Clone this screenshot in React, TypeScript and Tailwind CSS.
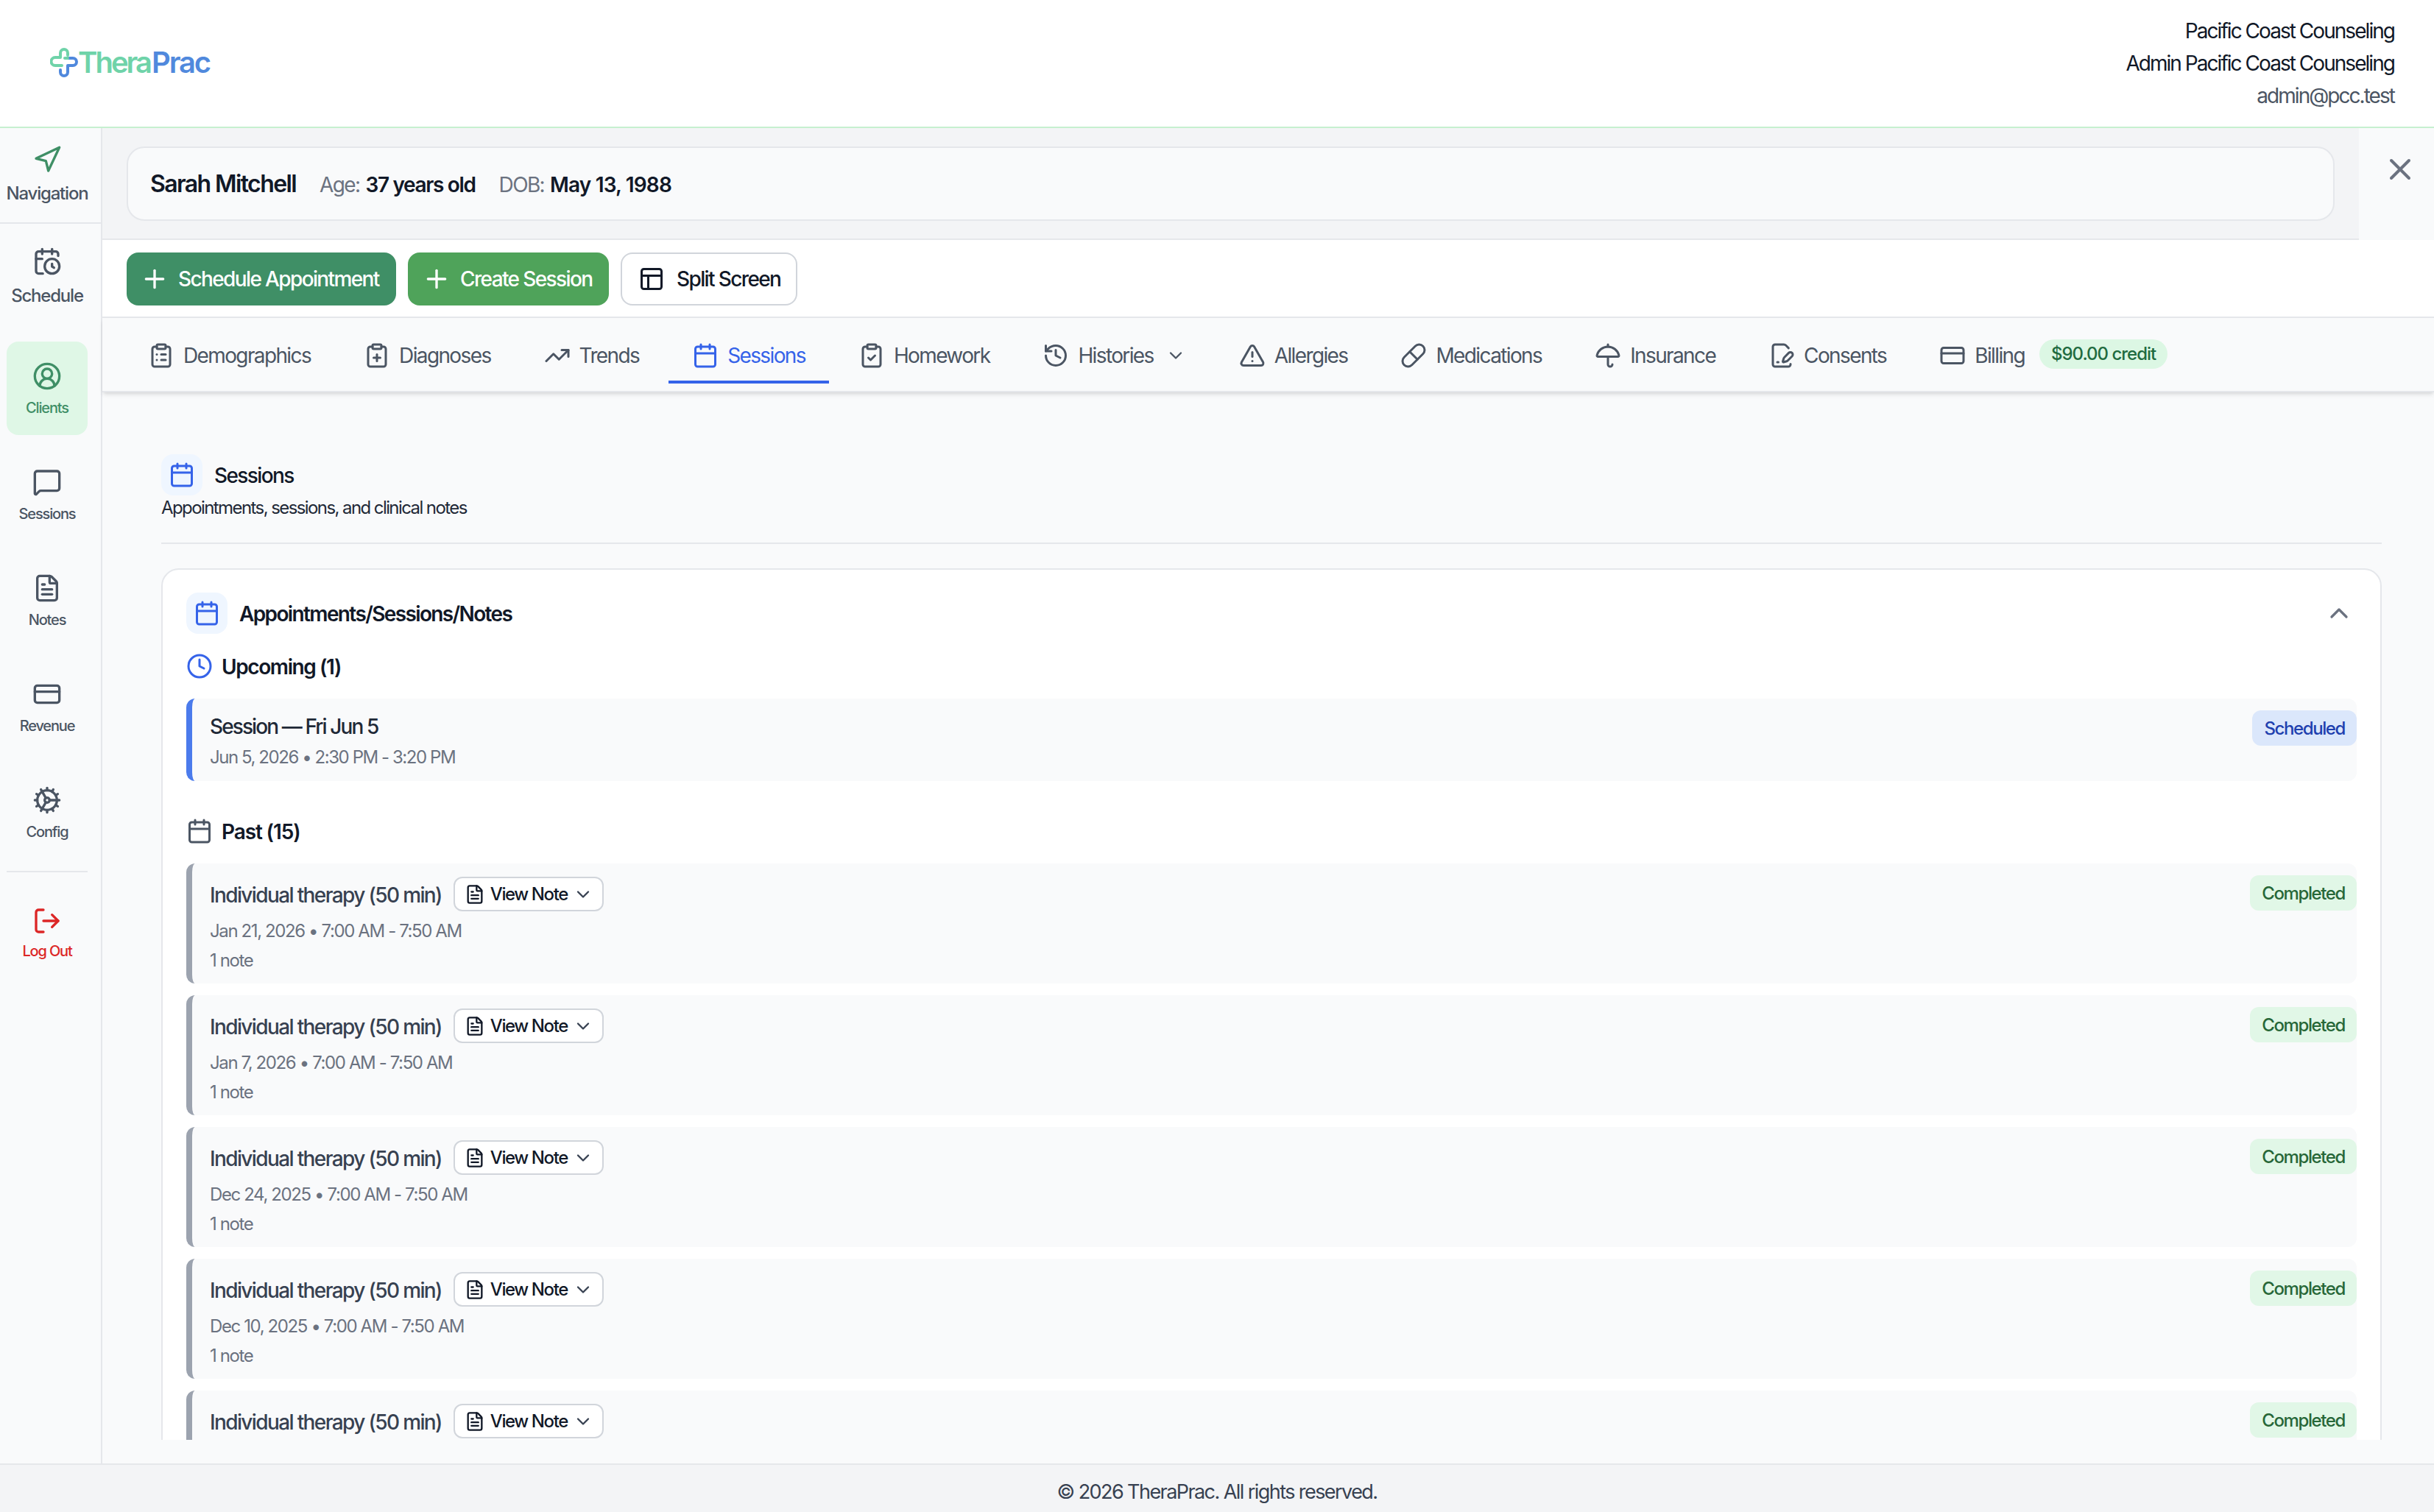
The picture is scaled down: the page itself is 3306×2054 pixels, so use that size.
import {
  Navigation, CalendarClock, CircleUserRound, MessageSquare, FileText, CreditCard, Cog, LogOut,
  ClipboardList, ClipboardPlus, TrendingUp, Calendar, ClipboardCheck, History, ChevronDown, ChevronUp,
  TriangleAlert, Pill, Umbrella, FilePenLine, Plus, PanelsTopLeft, X, Clock,
} from "lucide-react";

const tabs = [
  { label: "Demographics", icon: ClipboardList },
  { label: "Diagnoses", icon: ClipboardPlus },
  { label: "Trends", icon: TrendingUp },
  { label: "Sessions", icon: Calendar, active: true },
  { label: "Homework", icon: ClipboardCheck },
  { label: "Histories", icon: History, caret: true },
  { label: "Allergies", icon: TriangleAlert },
  { label: "Medications", icon: Pill },
  { label: "Insurance", icon: Umbrella },
  { label: "Consents", icon: FilePenLine },
  { label: "Billing", icon: CreditCard, credit: "$90.00 credit" },
];

// the last row is cut off by the scroll area, only its first line shows
const past = [
  "Jan 21, 2026 • 7:00 AM - 7:50 AM",
  "Jan 7, 2026 • 7:00 AM - 7:50 AM",
  "Dec 24, 2025 • 7:00 AM - 7:50 AM",
  "Dec 10, 2025 • 7:00 AM - 7:50 AM",
  "",
];

const SideItem = ({ icon: Icon, label }: { icon: typeof Cog; label: string }) => (
  <div className="flex h-[127px] flex-col items-center pt-[27px] text-[#4b5563]">
    <Icon className="size-10" strokeWidth={2} />
    <span className="mt-[9px] text-[20px] leading-[28px] font-medium">{label}</span>
  </div>
);

const Logo = () => (
  <div className="flex items-center">
    <svg viewBox="0 0 38 40" className="h-[40px] w-[38px]" fill="none" strokeWidth="4" strokeLinecap="round" strokeLinejoin="round">
      <path d="M14 13V7a5 5 0 0 1 10 0v3M14 13H7a5.5 5.5 0 0 0 0 11h9" stroke="#6fd3a9" />
      <path d="M24 14h7a5 5 0 0 1 0 10h-7v9a5 5 0 0 1-10 0v-3" stroke="#5089dd" />
      <path d="M24 14h-4" stroke="#6fd3a9" />
    </svg>
    <span className="text-[40px] leading-none font-semibold !tracking-[-3px] text-[#6fd3a9]">Thera</span>
    <span className="ml-[2px] text-[40px] leading-none font-semibold !tracking-[-2.2px] text-[#5089dd]">Prac</span>
  </div>
);

const PastRow = ({ when }: { when: string }) => (
  <div className="flex h-[163px] shrink-0 items-start justify-between rounded-xl border-l-8 border-[#9ca3af] bg-[#f9fafb] pt-4">
    <div className="pl-6">
      <div className="flex items-center gap-4 pt-[2px]">
        <span className="mt-[3px] text-[28px] leading-[42px] font-medium text-[#374151]">Individual therapy (50 min)</span>
        <button className="flex h-[47px] w-[204px] items-center rounded-xl border-2 border-[#d1d5db] bg-white pl-[13px] text-[24px] font-medium whitespace-nowrap text-[#111827]">
          <FileText className="size-7" strokeWidth={2} />
          <span className="ml-[7px] pt-[1px]">View Note</span>
          <ChevronDown className="ml-[7px] size-7 text-[#374151]" strokeWidth={2} />
        </button>
      </div>
      {when && (
        <>
          <div className="mt-[9px] text-[24px] leading-[36px] text-[#6b7280]">{when}</div>
          <div className="mt-1 text-[24px] leading-[36px] text-[#6b7280]">1 note</div>
        </>
      )}
    </div>
    <span className="flex h-12 items-center rounded-xl bg-[#e1f7e7] px-4 pt-[1px] text-[24px] font-medium text-[#276738]">Completed</span>
  </div>
);

export default function App() {
  return (
    <div className="flex h-[2054px] w-[3306px] flex-col overflow-hidden bg-white [font-family:Inter,sans-serif] [&_*]:tracking-[-0.058em]">
      <header className="flex h-[174px] shrink-0 items-center justify-between border-b-2 border-[#c6f0d0] bg-white pr-[54px] pl-[68px]">
        <div className="-mt-[2px]">
          <Logo />
        </div>
        <div className="text-right text-[28px] leading-[44px] text-[#111827]">
          <div className="!tracking-[-0.07em]">Pacific Coast Counseling</div>
          <div className="!tracking-[-0.07em]">Admin Pacific Coast Counseling</div>
          <div className="!tracking-[-0.07em] text-[#4b5563]">admin@pcc.test</div>
        </div>
      </header>

      <div className="flex min-h-0 flex-1">
        <aside className="flex w-[139px] shrink-0 flex-col border-r-2 border-[#e5e7eb] bg-[#f9fafb]">
          <div className="flex h-[130px] flex-col items-center border-b-2 border-[#e5e7eb] pt-[23px] pr-[9px] text-[#3f8f66]">
            <Navigation className="size-10" strokeWidth={2} />
            <span className="mt-[9px] text-[24px] leading-[34px] font-medium !tracking-[-0.05em] text-[#4b5563]">Navigation</span>
          </div>
          <div className="flex h-[160px] flex-col items-center pt-[31px] pr-[9px] text-[#4b5563]">
            <CalendarClock className="size-10" strokeWidth={2} />
            <span className="mt-[10px] text-[24px] leading-[34px] font-medium !tracking-[-0.05em]">Schedule</span>
          </div>
          <div className="flex flex-col gap-[17px] pr-[18px] pl-[9px]">
            <div className="flex h-[127px] flex-col items-center rounded-2xl bg-[#dff7e6] pt-[27px] text-[#3f8f66]">
              <CircleUserRound className="size-10" strokeWidth={2} />
              <span className="mt-[9px] text-[20px] leading-[28px] font-medium">Clients</span>
            </div>
            <SideItem icon={MessageSquare} label="Sessions" />
            <SideItem icon={FileText} label="Notes" />
            <SideItem icon={CreditCard} label="Revenue" />
            <SideItem icon={Cog} label="Config" />
          </div>
          <div className="mt-[16px] mr-[18px] ml-[9px] border-t-2 border-[#e5e7eb]" />
          <div className="flex flex-col items-center pt-[46px] pr-[9px] text-[#dc2626]">
            <LogOut className="size-10" strokeWidth={2} />
            <span className="mt-[7px] text-[20px] leading-[28px] font-medium">Log Out</span>
          </div>
        </aside>

        <main className="flex min-w-0 flex-1 flex-col">
          <div className="flex h-[152px] shrink-0">
            <div className="flex flex-1 border-b-2 border-[#e5e7eb] bg-[#f3f4f6] px-[33px] pt-[25px] pb-[25px]">
              <div className="flex h-[101px] flex-1 items-center rounded-3xl border-2 border-[#e5e7eb] bg-[#f9fafb] pl-[30px] text-[28px] leading-[42px]">
                <span className="text-[32px] font-semibold !tracking-[-0.05em] text-[#111827]">Sarah Mitchell</span>
                <span className="ml-8 pt-[2px] text-[#6b7280]">Age:</span>
                <span className="ml-2 pt-[2px] font-semibold !tracking-[-0.048em] text-[#111827]">37 years old</span>
                <span className="ml-8 pt-[2px] text-[#6b7280]">DOB:</span>
                <span className="ml-2 pt-[2px] font-semibold !tracking-[-0.03em] text-[#111827]">May 13, 1988</span>
              </div>
            </div>
            <div className="flex w-[102px] justify-center bg-[#f9fafb] pt-[32px] pl-[10px]">
              <X className="size-12 text-[#6b7280]" strokeWidth={2} />
            </div>
          </div>

          <div className="flex h-[106px] shrink-0 items-center gap-4 border-b-2 border-[#e5e7eb] bg-white pt-[2px] pl-[33px]">
            <button className="flex h-[72px] w-[366px] items-center gap-3 rounded-2xl bg-[#3f8f66] pl-[18px] text-[28px] font-medium whitespace-nowrap text-white">
              <Plus className="size-10" strokeWidth={2} />
              Schedule Appointment
            </button>
            <button className="flex h-[72px] w-[273px] items-center gap-3 rounded-2xl bg-[#4fa35a] pl-[19px] text-[28px] font-medium whitespace-nowrap text-white">
              <Plus className="size-10" strokeWidth={2} />
              Create Session
            </button>
            <button className="flex h-[72px] w-[240px] items-center gap-4 rounded-2xl border-2 border-[#d1d5db] bg-white pl-[22px] text-[28px] font-medium whitespace-nowrap text-[#111827]">
              <PanelsTopLeft className="size-9" strokeWidth={2} />
              Split Screen
            </button>
          </div>

          <nav className="z-10 flex h-[101px] shrink-0 gap-2 border-b-2 border-[#e5e7eb] bg-[#f9fafb] pl-[30px] shadow-md">
            {tabs.map((t) => (
              <div
                key={t.label}
                className={`flex h-[89px] items-center gap-3 border-b-4 px-8 pt-[17px] text-[28px] ${t.active ? "border-[#3563e9] text-[#3563e9]" : "border-transparent text-[#4b5563]"}`}
              >
                <t.icon className="size-9" strokeWidth={2} />
                <span>{t.label}</span>
                {t.caret && <ChevronDown className="ml-1 size-7" strokeWidth={2} />}
                {t.credit && (
                  <span className="-mt-1 ml-2 flex h-10 items-center rounded-full bg-[#dcf7e4] px-4 text-[24px] font-medium !tracking-[-0.042em] text-[#1f6b3f]">{t.credit}</span>
                )}
              </div>
            ))}
          </nav>

          <div className="flex min-h-0 flex-1 flex-col bg-[#f9fafb] pt-[84px] pr-[71px] pb-[32px] pl-[80px]">
            <div className="flex h-[56px] shrink-0 items-center gap-4">
              <div className="flex size-14 items-center justify-center rounded-2xl bg-[#eff6ff]">
                <Calendar className="size-9 text-[#3563e9]" strokeWidth={2} />
              </div>
              <span className="pt-[2px] text-[28px] font-medium text-[#111827]">Sessions</span>
            </div>
            <p className="-mt-[1px] text-[24px] leading-[36px] !tracking-[-0.066em] text-[#1f2937]">Appointments, sessions, and clinical notes</p>
            <div className="mt-[29px] shrink-0 border-t-2 border-[#e5e7eb]" />
            <div className="mt-[33px] min-h-0 flex-1 overflow-hidden">
              <div className="rounded-3xl border-2 border-[#e5e7eb] bg-white px-[32px] pt-[31px] pb-10">
                <div className="flex items-center justify-between">
                  <div className="flex items-center gap-4">
                    <div className="flex size-14 items-center justify-center rounded-2xl bg-[#eff6ff]">
                      <Calendar className="size-9 text-[#3563e9]" strokeWidth={2} />
                    </div>
                    <span className="pt-[2px] text-[28px] font-semibold text-[#111827]">Appointments/Sessions/Notes</span>
                  </div>
                  <ChevronUp className="mr-[4px] size-10 text-[#6b7280]" strokeWidth={2} />
                </div>

                <div className="mt-[23px] flex h-[42px] items-center gap-3 text-[28px] font-semibold text-[#111827]">
                  <Clock className="size-9 text-[#3563e9]" strokeWidth={2} />
                  <span className="pt-[2px] !tracking-[-0.05em]">Upcoming (1)</span>
                </div>
                <div className="mt-[23px] flex items-start justify-between rounded-xl border-l-8 border-[#4b7bec] bg-[#f9fafb] pt-4 pb-[14px]">
                  <div className="pl-6">
                    <div className="pt-[1px] text-[28px] leading-[42px] font-medium !tracking-[-0.068em] text-[#1f2937]">Session — Fri Jun 5</div>
                    <div className="mt-[3px] text-[24px] leading-[36px] !tracking-[-0.06em] text-[#6b7280]">Jun 5, 2026 • 2:30 PM - 3:20 PM</div>
                  </div>
                  <span className="flex h-12 items-center rounded-xl bg-[#dbe7fb] px-4 pt-[1px] text-[24px] font-medium text-[#1e40af]">Scheduled</span>
                </div>

                <div className="mt-[47px] flex h-[42px] items-center gap-3 text-[28px] font-semibold text-[#111827]">
                  <Calendar className="size-9 text-[#4b5563]" strokeWidth={2} />
                  <span className="pt-[2px] !tracking-[-0.04em]">Past (15)</span>
                </div>
                <div className="mt-[23px] flex flex-col gap-4">
                  {past.map((p, i) => (
                    <PastRow key={i} when={p} />
                  ))}
                </div>
              </div>
            </div>
          </div>
        </main>
      </div>

      <footer className="flex h-[66px] shrink-0 items-center justify-center border-t-2 border-[#e5e7eb] bg-[#f3f4f6] pt-[10px] text-[27px] text-[#374151]">
        © 2026 TheraPrac. All rights reserved.
      </footer>
    </div>
  );
}
